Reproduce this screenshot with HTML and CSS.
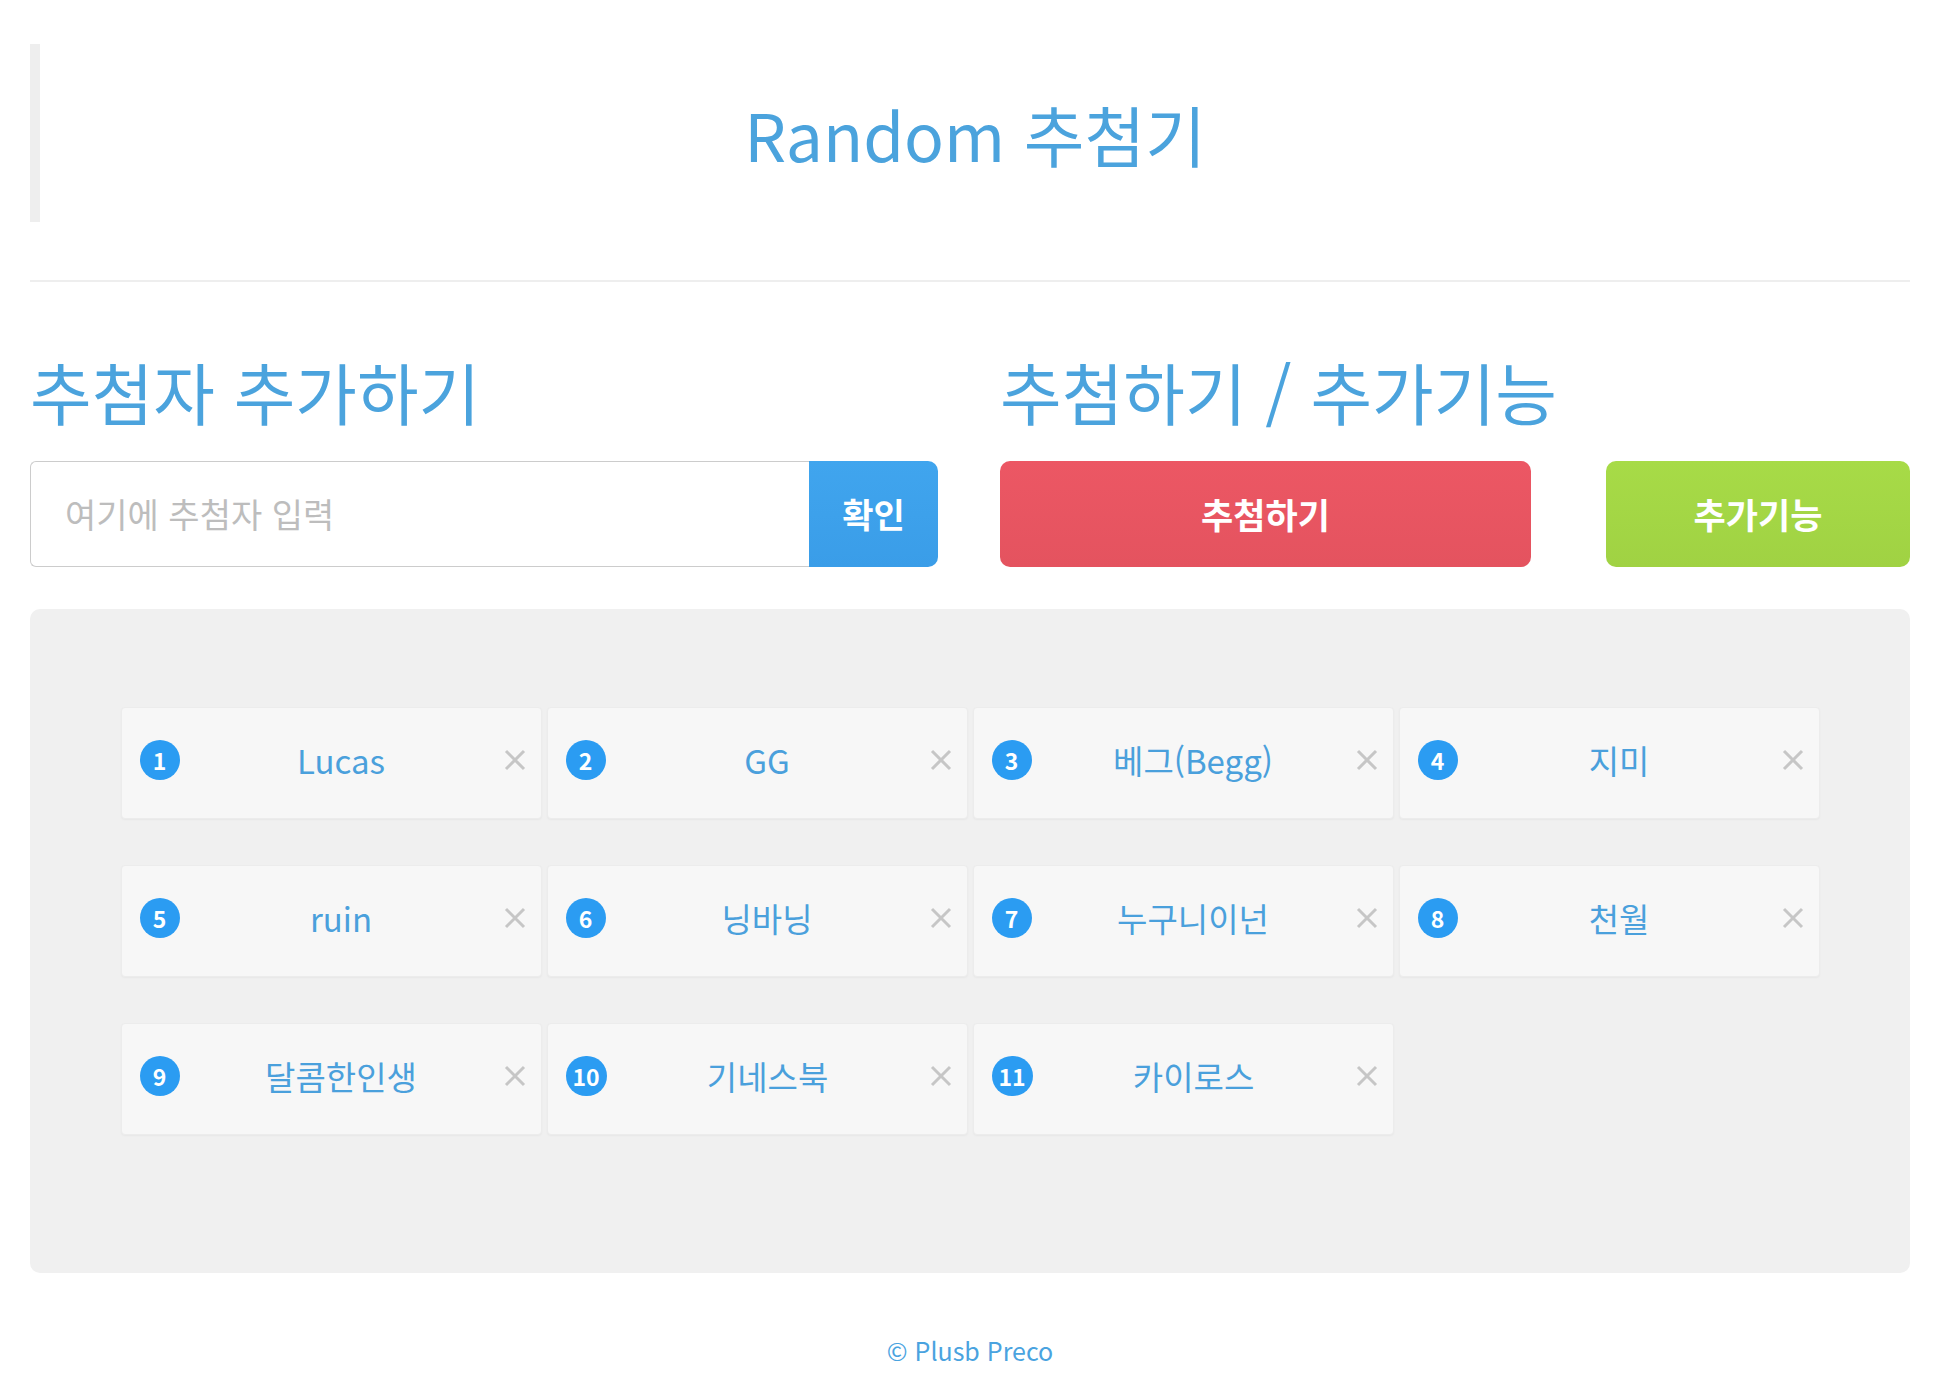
FILE: index.html
```html
<!DOCTYPE html>
<html lang="ko">
<head>
    <meta charset="UTF-8">
    <title>Random 추첨기</title>
    <link rel="stylesheet" href="styles.css">
</head>
<body>
    <div class="container">
        <div class="title-box">
            <h1>Random 추첨기</h1>
        </div>
        <hr>

        <div class="controls">
            <div class="col-left">
                <h2>추첨자 추가하기</h2>
                <form class="add-form" onsubmit="return false;">
                    <input type="text" id="player_name" placeholder="여기에 추첨자 입력">
                    <button type="submit" class="btn-ok">확인</button>
                </form>
            </div>
            <div class="col-right">
                <h2>추첨하기 / 추가기능</h2>
                <div class="btn-row">
                    <button class="btn-draw">추첨하기</button>
                    <button class="btn-extra">추가기능</button>
                </div>
            </div>
        </div>

        <div class="list-panel">
            <ul class="player-list">
                <li class="player"><span class="num">1</span><span class="name">Lucas</span><span class="del"><svg viewBox="0 0 24 24"><path d="M3 3L21 21M21 3L3 21"/></svg></span></li>
                <li class="player"><span class="num">2</span><span class="name">GG</span><span class="del"><svg viewBox="0 0 24 24"><path d="M3 3L21 21M21 3L3 21"/></svg></span></li>
                <li class="player"><span class="num">3</span><span class="name">베그(Begg)</span><span class="del"><svg viewBox="0 0 24 24"><path d="M3 3L21 21M21 3L3 21"/></svg></span></li>
                <li class="player"><span class="num">4</span><span class="name">지미</span><span class="del"><svg viewBox="0 0 24 24"><path d="M3 3L21 21M21 3L3 21"/></svg></span></li>
                <li class="player"><span class="num">5</span><span class="name">ruin</span><span class="del"><svg viewBox="0 0 24 24"><path d="M3 3L21 21M21 3L3 21"/></svg></span></li>
                <li class="player"><span class="num">6</span><span class="name">닝바닝</span><span class="del"><svg viewBox="0 0 24 24"><path d="M3 3L21 21M21 3L3 21"/></svg></span></li>
                <li class="player"><span class="num">7</span><span class="name">누구니이넌</span><span class="del"><svg viewBox="0 0 24 24"><path d="M3 3L21 21M21 3L3 21"/></svg></span></li>
                <li class="player"><span class="num">8</span><span class="name">천월</span><span class="del"><svg viewBox="0 0 24 24"><path d="M3 3L21 21M21 3L3 21"/></svg></span></li>
                <li class="player"><span class="num">9</span><span class="name">달콤한인생</span><span class="del"><svg viewBox="0 0 24 24"><path d="M3 3L21 21M21 3L3 21"/></svg></span></li>
                <li class="player"><span class="num">10</span><span class="name">기네스북</span><span class="del"><svg viewBox="0 0 24 24"><path d="M3 3L21 21M21 3L3 21"/></svg></span></li>
                <li class="player"><span class="num">11</span><span class="name">카이로스</span><span class="del"><svg viewBox="0 0 24 24"><path d="M3 3L21 21M21 3L3 21"/></svg></span></li>
            </ul>
        </div>

        <p class="footer">© Plusb Preco</p>
    </div>
</body>
</html>
```

FILE: styles.css
```css
body {
    margin: 0;
    padding: 0;
    background-color: #ffffff;
    font-family: 'Noto Sans CJK KR', 'Noto Sans', sans-serif;
    color: #4ba3dd;
}

.container {
    width: 1880px;
    margin-left: 30px;
    padding-top: 44px;
}

.title-box {
    height: 178px;
    border-left: 10px solid #eeeeee;
    display: flex;
    align-items: center;
    justify-content: center;
}

h1 {
    margin: 0;
    font-size: 66px;
    font-weight: normal;
    line-height: 1;
    color: #4ba3dd;
}

hr {
    margin: 58px 0 0;
    border: none;
    border-top: 2px solid #eeeeee;
}

.controls {
    display: flex;
    justify-content: space-between;
    margin-top: 72px;
}

.col-left {
    width: 908px;
}

.col-right {
    width: 910px;
}

h2 {
    margin: 0 0 33px;
    font-size: 67px;
    font-weight: normal;
    line-height: 1.1;
    color: #4ba3dd;
}

.add-form {
    display: flex;
    height: 106px;
}

.add-form input {
    flex: 1;
    border: 1px solid #cccccc;
    border-right: none;
    border-radius: 6px 0 0 6px;
    padding: 0 0 0 34px;
    font-family: inherit;
    font-size: 34px;
    color: #555;
    outline: none;
}

.add-form input::placeholder {
    color: #bdbdbd;
}

.btn-ok {
    width: 129px;
    border: none;
    border-radius: 0 10px 10px 0;
    background: linear-gradient(#40a5ee, #3a9de8);
    color: #ffffff;
    font-family: inherit;
    font-size: 34px;
    font-weight: bold;
    cursor: pointer;
}

.btn-row {
    display: flex;
    justify-content: space-between;
    height: 106px;
}

.btn-row button {
    border: none;
    border-radius: 10px;
    color: #ffffff;
    font-family: inherit;
    font-size: 35px;
    font-weight: bold;
    cursor: pointer;
}

.btn-draw {
    width: 531px;
    background: linear-gradient(#ec5764, #e4535f);
}

.btn-extra {
    width: 304px;
    background: linear-gradient(#a7db47, #a0d243);
}

.list-panel {
    margin-top: 42px;
    background-color: #f0f0f0;
    border-radius: 10px;
    padding: 98px 0 138px;
}

.player-list {
    list-style: none;
    margin: 0;
    padding: 0;
    display: grid;
    grid-template-columns: repeat(4, 421px);
    column-gap: 5px;
    row-gap: 46px;
    justify-content: center;
}

.player {
    height: 112px;
    box-sizing: border-box;
    display: flex;
    align-items: center;
    padding: 0 14px 5px 18px;
    background-color: #f7f7f7;
    border: 1px solid #ececec;
    border-radius: 4px;
    box-shadow: 0 1px 2px rgba(0,0,0,0.04);
}

.num {
    min-width: 40px;
    height: 40px;
    padding: 0 7px;
    box-sizing: border-box;
    border-radius: 20px;
    background-color: #2b9cf2;
    color: #ffffff;
    font-size: 23px;
    font-weight: bold;
    display: flex;
    align-items: center;
    justify-content: center;
}

.name {
    flex: 1;
    text-align: center;
    font-size: 33px;
    color: #4aa0dc;
}

.del {
    width: 24px;
    height: 24px;
    display: flex;
}

.del svg {
    width: 24px;
    height: 24px;
    stroke: #c6c6c6;
    stroke-width: 3;
    fill: none;
}

.footer {
    margin: 59px 0 0;
    text-align: center;
    font-size: 25px;
    color: #4aa3df;
}
```
